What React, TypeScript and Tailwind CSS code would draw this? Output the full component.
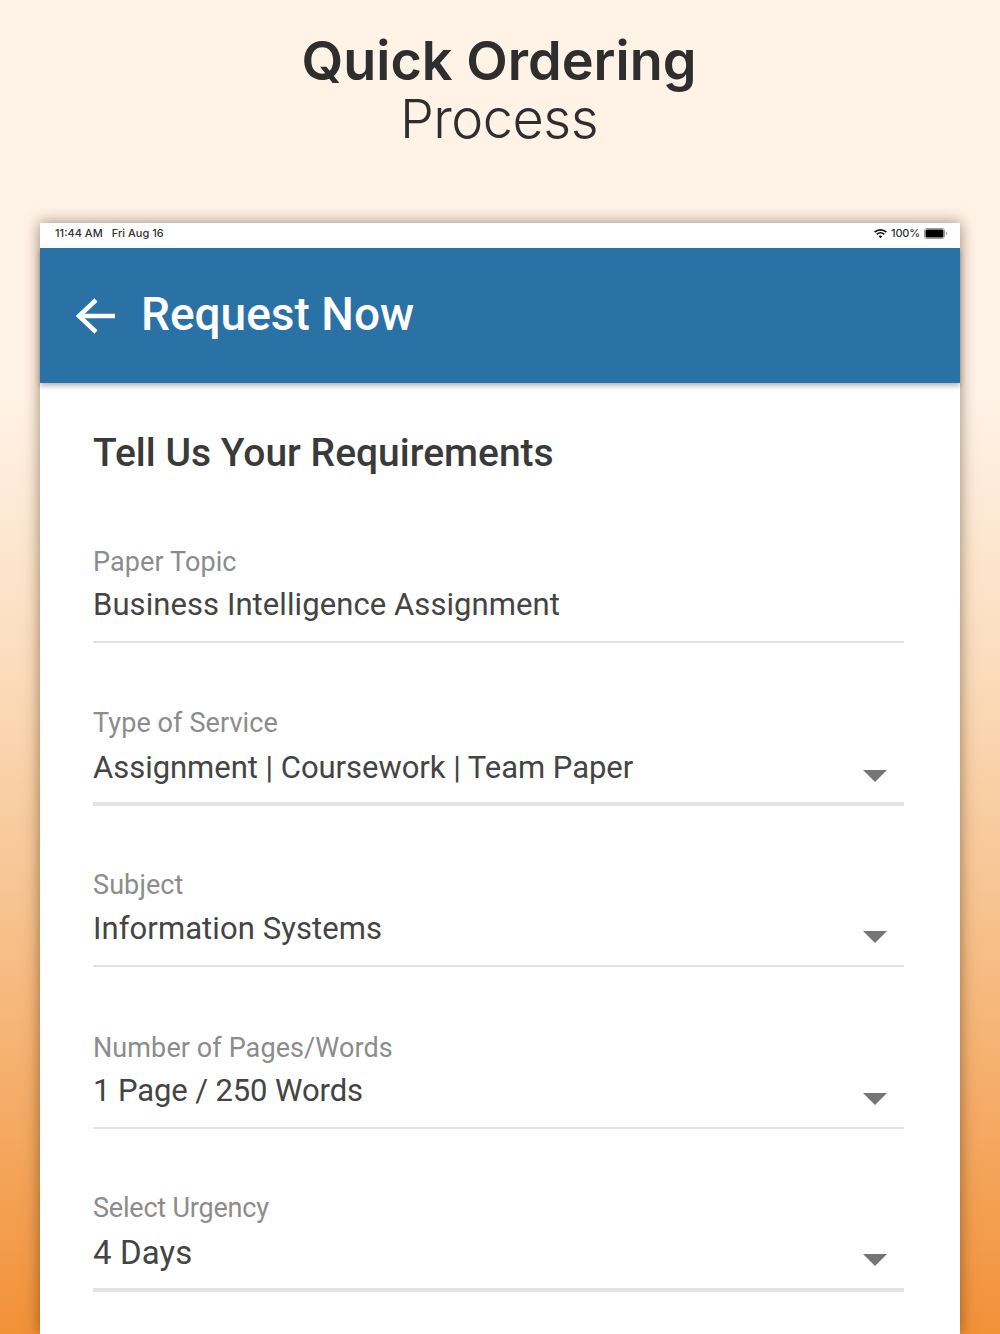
import { ReactNode } from 'react';

const fields = [
  { label: 'Paper Topic', value: 'Business Intelligence Assignment', line: 'h-[2px] mt-[9px]', select: false, h: 'h-[162px]', labelGap: 'pb-0', size: 'text-[31px] tracking-[0.08px]', labelSize: 'tracking-[0.1px]', caretPad: 'pt-[14px]' },
  { label: 'Type of Service', value: 'Assignment | Coursework | Team Paper', line: 'h-[4px] mt-[7px]', select: true, h: 'h-[163px]', labelGap: 'pb-[2px]', size: 'text-[31px] tracking-[-0.03px]', labelSize: 'tracking-[0.1px]', caretPad: 'pt-[14px]' },
  { label: 'Subject', value: 'Information Systems', line: 'h-[2px] mt-[9px]', select: true, h: 'h-[161px]', labelGap: 'pb-[1px]', size: 'text-[31px] tracking-[0.08px]', labelSize: 'tracking-[0.1px]', caretPad: 'pt-[14px]' },
  { label: 'Number of Pages/Words', value: '1 Page / 250 Words', line: 'h-[2px] mt-[9px]', select: true, h: 'h-[162px]', labelGap: 'pb-0', size: 'text-[31px] tracking-[-0.1px]', labelSize: 'tracking-[0.1px]', caretPad: 'pt-[14px]' },
  { label: 'Select Urgency', value: '4 Days', line: 'h-[4px] mt-[8px]', select: true, h: 'h-[163px]', labelGap: 'pb-[2px]', size: 'text-[33px] tracking-[0.1px]', labelSize: 'tracking-[-0.2px]', caretPad: 'pt-[12px]' },
];

type FieldProps = { label: string; value: string; line: string; select: boolean; h: string; labelGap: string; size: string; labelSize: string; caretPad: string };

const Caret = () => (
  <svg width="26" height="13" viewBox="0 0 26 13">
    <path d="M1 1h24L13 13z" fill="#757575" />
  </svg>
);

const Field = ({ label, value, line, select, h, labelGap, size, labelSize, caretPad }: FieldProps) => (
  <div className={`${h} flex flex-col justify-end`}>
    <div className={`${labelGap} ${labelSize} text-[27px] leading-[32px] text-[#8c8c8c]`}>{label}</div>
    <div className="flex items-center justify-between h-[54px] pr-[16px]">
      <span className={`${size} leading-[38px] text-[#444]`}>{value}</span>
      {select && <span className={`flex ${caretPad}`}><Caret /></span>}
    </div>
    <div className={`${line} bg-[#e3e3e3]`} />
  </div>
);

const StatusBar = (): ReactNode => (
  <div className="h-[25px] bg-white flex items-center justify-between pl-[15px] pr-[13px] pb-[4px] font-['Inter',sans-serif] text-[11px] text-[#333]">
    <div className="flex gap-[9px] font-medium">
      <span>11:44 AM</span>
      <span>Fri Aug 16</span>
    </div>
    <div className="flex items-center gap-[4px]">
      <svg width="13" height="10" viewBox="0 0 14 10" fill="#111">
        <path d="M7 9.600 5 7.400a3 3 0 0 1 4 0zM3.600 6 2.400 4.700a7 7 0 0 1 9.200 0L10.400 6a5.200 5.200 0 0 0-6.800 0zM1.300 3.700 0 2.400a10.200 10.200 0 0 1 14 0l-1.300 1.300a8.300 8.300 0 0 0-11.400 0z" />
      </svg>
      <span className="font-medium tracking-[-0.2px]">100%</span>
      <svg width="23" height="11" viewBox="0 0 23 11">
        <rect x="0.500" y="0.500" width="20" height="10" rx="2.500" fill="none" stroke="#999" />
        <rect x="1.500" y="1.500" width="18" height="8" rx="1.500" fill="#000" />
        <path d="M22 4v3a1.500 1.500 0 0 0 1-1.500A1.500 1.500 0 0 0 22 4z" fill="#888" />
      </svg>
    </div>
  </div>
);

export default function App() {
  return (
    <div className="w-[1000px] h-[1334px] overflow-hidden bg-[linear-gradient(to_bottom,#fff2e6_0%,#fff2e6_30%,#fbdcbc_50%,#f7c38f_68%,#f29138_100%)]">
      <div className="h-[223px] pt-[28px] pr-[2px] text-center text-[#2e2e2e] font-['Inter',sans-serif]">
        <h1 className="text-[54px] leading-[66px] font-semibold">Quick Ordering</h1>
        <p className="text-[54px] leading-[49px] font-light tracking-[-0.5px]">Process</p>
      </div>
      <div className="mx-[40px] h-[1111px] bg-white shadow-[0_0_14px_rgba(70,40,10,0.55)] font-['Roboto',sans-serif]">
        <StatusBar />
        <div className="h-[135px] bg-[#2a71a6] flex items-center pl-[35px] gap-[25px] pb-[4px] shadow-[0_3px_5px_rgba(0,0,0,0.28)] relative">
          <svg width="41" height="38" viewBox="0 0 41 38" fill="none" stroke="white" strokeWidth="4.500" className="mt-[4px]">
            <path d="M40 19H5M21 3 4 19l17 16" />
          </svg>
          <span className="text-[46px] leading-[54px] font-medium text-white">Request Now</span>
        </div>
        <div className="pl-[53px] pr-[56px]">
          <h2 className="pt-[45px] text-[39px] leading-[50px] font-medium text-[#3a3a3a] h-[98px]">Tell Us Your Requirements</h2>
          {fields.map((f) => (
            <Field key={f.label} {...f} />
          ))}
        </div>
      </div>
    </div>
  );
}
